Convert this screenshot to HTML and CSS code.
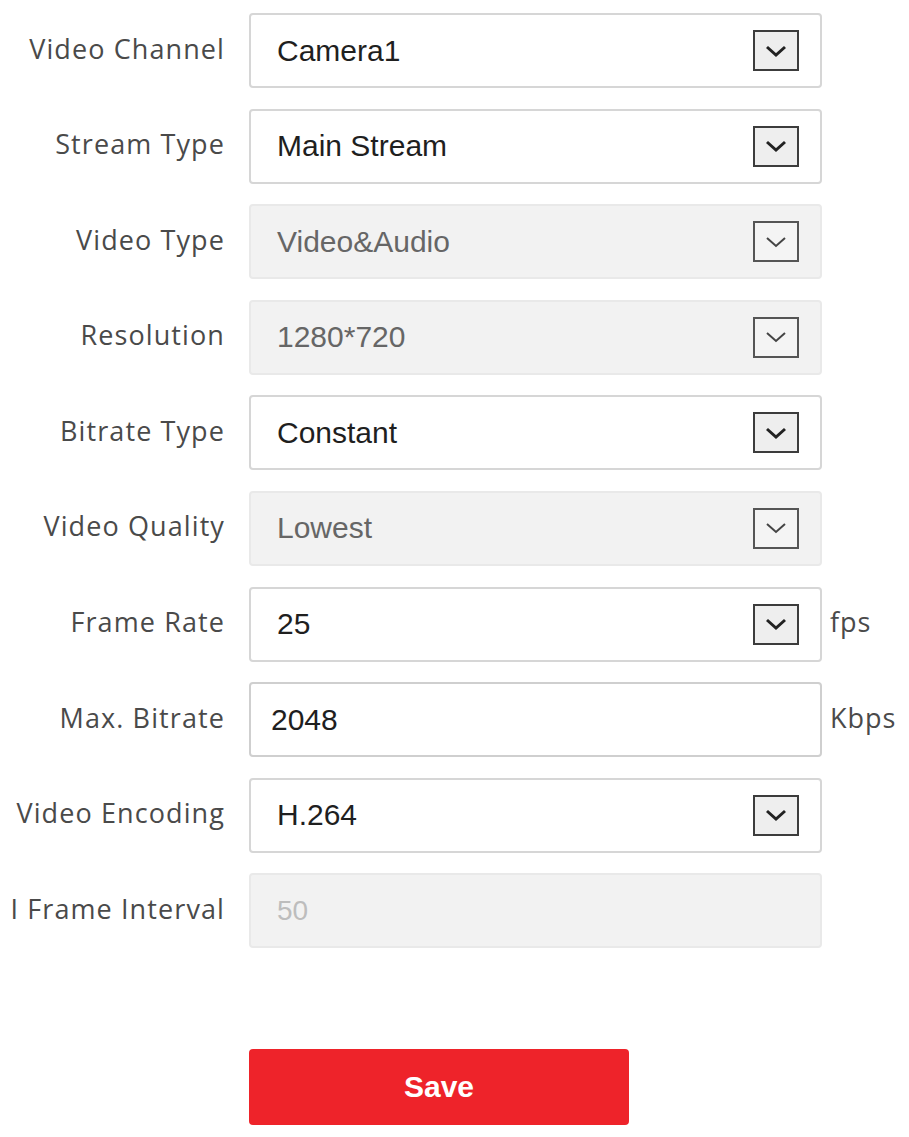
FILE: index.html
```html
<!DOCTYPE html>
<html lang="en">
<head>
    <meta charset="UTF-8">
    <meta name="viewport" content="width=device-width, initial-scale=1.0">
    <title>Video Settings</title>
    <link rel="stylesheet" href="styles.css">
</head>
<body>
    <form class="settings">
        <label class="label">Video Channel</label>
        <div class="field">
            <span class="value">Camera1</span>
            <span class="arrow"><svg width="22" height="12" viewBox="0 0 22 12"><path d="M2 2 L11 10 L20 2" fill="none" stroke="#222" stroke-width="3"/></svg></span>
        </div>
        <span class="unit"></span>

        <label class="label">Stream Type</label>
        <div class="field">
            <span class="value">Main Stream</span>
            <span class="arrow"><svg width="22" height="12" viewBox="0 0 22 12"><path d="M2 2 L11 10 L20 2" fill="none" stroke="#222" stroke-width="3"/></svg></span>
        </div>
        <span class="unit"></span>

        <label class="label">Video Type</label>
        <div class="field disabled">
            <span class="value">Video&amp;Audio</span>
            <span class="arrow"><svg width="22" height="12" viewBox="0 0 22 12"><path d="M2 2 L11 10 L20 2" fill="none" stroke="#444" stroke-width="2"/></svg></span>
        </div>
        <span class="unit"></span>

        <label class="label">Resolution</label>
        <div class="field disabled">
            <span class="value">1280*720</span>
            <span class="arrow"><svg width="22" height="12" viewBox="0 0 22 12"><path d="M2 2 L11 10 L20 2" fill="none" stroke="#444" stroke-width="2"/></svg></span>
        </div>
        <span class="unit"></span>

        <label class="label">Bitrate Type</label>
        <div class="field">
            <span class="value">Constant</span>
            <span class="arrow"><svg width="22" height="12" viewBox="0 0 22 12"><path d="M2 2 L11 10 L20 2" fill="none" stroke="#222" stroke-width="3"/></svg></span>
        </div>
        <span class="unit"></span>

        <label class="label">Video Quality</label>
        <div class="field disabled">
            <span class="value">Lowest</span>
            <span class="arrow"><svg width="22" height="12" viewBox="0 0 22 12"><path d="M2 2 L11 10 L20 2" fill="none" stroke="#444" stroke-width="2"/></svg></span>
        </div>
        <span class="unit"></span>

        <label class="label">Frame Rate</label>
        <div class="field">
            <span class="value">25</span>
            <span class="arrow"><svg width="22" height="12" viewBox="0 0 22 12"><path d="M2 2 L11 10 L20 2" fill="none" stroke="#222" stroke-width="3"/></svg></span>
        </div>
        <span class="unit">fps</span>

        <label class="label">Max. Bitrate</label>
        <div class="field text">
            <span class="value">2048</span>
        </div>
        <span class="unit">Kbps</span>

        <label class="label">Video Encoding</label>
        <div class="field">
            <span class="value">H.264</span>
            <span class="arrow"><svg width="22" height="12" viewBox="0 0 22 12"><path d="M2 2 L11 10 L20 2" fill="none" stroke="#222" stroke-width="3"/></svg></span>
        </div>
        <span class="unit"></span>

        <label class="label">I Frame Interval</label>
        <div class="field disabled">
            <span class="value faint">50</span>
        </div>
        <span class="unit"></span>
    </form>

    <div class="actions">
        <button type="button" class="save">Save</button>
    </div>
</body>
</html>
```

FILE: styles.css
```css
body {
    margin: 0;
    background-color: #fff;
    font-family: 'Liberation Sans', Arial, sans-serif;
}

.settings {
    display: grid;
    grid-template-columns: 224px 573px 1fr;
    grid-auto-rows: 75px;
    column-gap: 25px;
    row-gap: 20.6px;
    padding-top: 13px;
    align-items: center;
}

.label {
    font-family: 'Open Sans', sans-serif;
    font-size: 27px;
    letter-spacing: 1.1px;
    color: #4a4a4a;
    text-align: right;
    white-space: nowrap;
    margin-top: -5px;
    margin-right: -1px;
}

.field {
    height: 75px;
    box-sizing: border-box;
    border: 2px solid #d6d6d6;
    border-radius: 4px;
    display: flex;
    align-items: center;
    justify-content: space-between;
    padding: 0 21px 0 26px;
    background-color: #fff;
}

.field.text {
    padding-left: 20px;
    border-color: #cfcfcf;
}

.field.disabled {
    background-color: #f2f2f2;
    border-color: #e9e9e9;
}

.value {
    font-size: 30px;
    color: #1f1f1f;
}

.disabled .value {
    color: #666;
}

.value.faint {
    color: #bdbdbd;
    font-size: 28px;
}

.arrow {
    width: 46px;
    height: 41px;
    box-sizing: border-box;
    border: 2px solid #3c3c3c;
    background-color: #eeeeee;
    display: flex;
    align-items: center;
    justify-content: center;
}

.disabled .arrow {
    border-color: #555;
    background-color: #f4f4f4;
}

.unit {
    font-family: 'Open Sans', sans-serif;
    font-size: 27px;
    letter-spacing: 1px;
    color: #4a4a4a;
    margin-left: -17px;
    margin-top: -5px;
}

.actions {
    padding: 101px 0 0 249px;
}

.save {
    width: 380px;
    height: 76px;
    border: none;
    border-radius: 4px;
    background-color: #ee232a;
    color: #fff;
    font-family: 'Liberation Sans', Arial, sans-serif;
    font-weight: bold;
    font-size: 30px;
    cursor: pointer;
}
```
